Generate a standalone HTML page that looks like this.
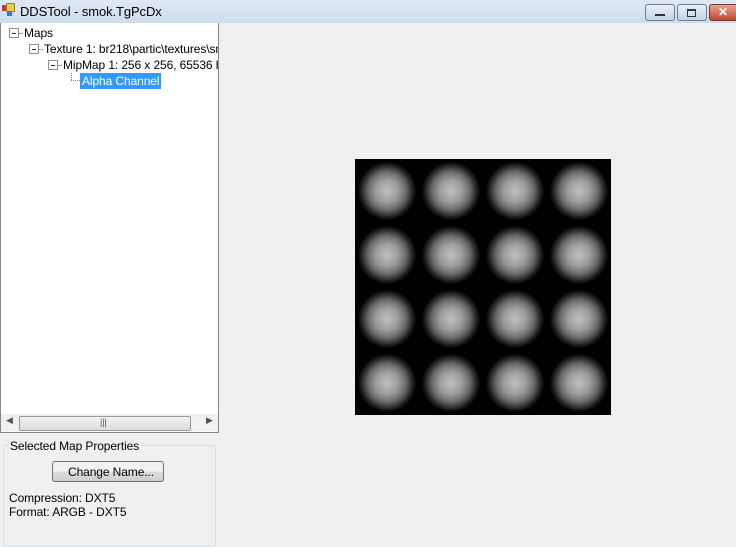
<!DOCTYPE html><html><head><style>
body{margin:0;width:736px;height:538px;background:#f0f0f0;font-family:"Liberation Sans",sans-serif;font-size:12px;position:relative;overflow:hidden}
.a{position:absolute}
.title{left:0;top:0;width:736px;height:23px;background:linear-gradient(#dfe9f5,#cfdcee)}
.tree{left:0;top:23px;width:217px;height:409px;background:#fff;border:1px solid #828790;border-top:none;overflow:hidden}
.t{position:absolute;white-space:nowrap;color:#000;letter-spacing:-0.1px}
.box{position:absolute;width:8px;height:8px;border:1px solid #919191;background:#fff}
.box:after{content:"";position:absolute;left:2px;top:4px;width:4px;height:1px;background:#333}
.dot{position:absolute;border-top:1px dotted #888}
.img{left:355px;top:159px;width:256px;height:256px;background:#000;display:grid;grid-template-columns:repeat(4,64px);grid-template-rows:repeat(4,64px)}
.img div{background:radial-gradient(circle at 50% 50%,#c0c0c0 0,#9c9c9c 25%,#6a6a6a 42%,#262626 56%,#000 65%)}
</style></head><body>
<div class="a title">
<div class="a" style="left:2px;top:5px;width:6px;height:6px;background:#c33"></div>
<div class="a" style="left:6px;top:3px;width:7px;height:7px;background:#f2c84a;border:1px solid #a80"></div>
<div class="a" style="left:7px;top:11px;width:5px;height:5px;background:#47c"></div>
<div class="t" style="left:20px;top:4px;font-size:13px">DDSTool - smok.TgPcDx</div>
<div class="a" style="left:645px;top:4px;width:28px;height:15px;border:1px solid #6d7d95;border-radius:3px;background:linear-gradient(#e9eff8,#c5d3e6)"><div class="a" style="left:9px;top:9px;width:10px;height:2px;background:#333"></div></div>
<div class="a" style="left:677px;top:4px;width:28px;height:15px;border:1px solid #6d7d95;border-radius:3px;background:linear-gradient(#e9eff8,#c5d3e6)"><div class="a" style="left:9px;top:4px;width:7px;height:5px;border:1px solid #333;border-top-width:2px"></div></div>
<div class="a" style="left:709px;top:4px;width:27px;height:15px;border:1px solid #7a3a2f;border-radius:3px;background:linear-gradient(#e8a493,#c4452f)"><div class="t" style="left:8px;top:0px;color:#fff;font-weight:bold;font-size:12px">✕</div></div>
</div>
<div class="a tree">
<div class="box" style="left:8px;top:5px"></div><div class="dot" style="left:18px;top:10px;width:4px"></div><div class="t" style="left:23px;top:3px">Maps</div>
<div class="box" style="left:28px;top:21px"></div><div class="dot" style="left:38px;top:26px;width:4px"></div><div class="t" style="left:43px;top:19px">Texture 1: br218\partic\textures\smo</div>
<div class="box" style="left:47px;top:37px"></div><div class="dot" style="left:57px;top:42px;width:4px"></div><div class="t" style="left:62px;top:35px">MipMap 1: 256 x 256, 65536 byte</div>
<div class="a" style="left:70px;top:50px;height:7px;border-left:1px dotted #888"></div><div class="dot" style="left:70px;top:57px;width:9px"></div>
<div class="t" style="left:79px;top:50px;background:#3399ff;color:#fff;padding:1px 2px">Alpha Channel</div>
<div class="a" style="left:0;top:391px;width:217px;height:17px;background:#f0f0f0"></div>
<div class="t" style="left:5px;top:392px;font-size:9px;color:#555">◀</div>
<div class="a" style="left:18px;top:393px;width:170px;height:13px;border:1px solid #999;border-radius:2px;background:linear-gradient(#f3f3f3,#dcdcdc)"><div class="t" style="left:80px;top:0;font-size:9px;color:#555">|||</div></div>
<div class="t" style="left:205px;top:392px;font-size:9px;color:#555">▶</div>
</div>
<div class="a" style="left:3px;top:445px;width:211px;height:100px;border:1px solid #d5dfe5;border-radius:3px"></div>
<div class="t" style="left:8px;top:439px;background:#f0f0f0;padding:0 2px">Selected Map Properties</div>
<div class="a" style="left:52px;top:461px;width:110px;height:19px;border:1px solid #707070;border-radius:3px;background:linear-gradient(#f2f2f2 50%,#dddddd 50%,#cfcfcf)"><div class="t" style="left:15px;top:3px">Change Name...</div></div>
<div class="t" style="left:9px;top:491px">Compression: DXT5</div>
<div class="t" style="left:9px;top:505px">Format: ARGB - DXT5</div>
<div class="a img"><div></div><div></div><div></div><div></div><div></div><div></div><div></div><div></div><div></div><div></div><div></div><div></div><div></div><div></div><div></div><div></div></div>
</body></html>
